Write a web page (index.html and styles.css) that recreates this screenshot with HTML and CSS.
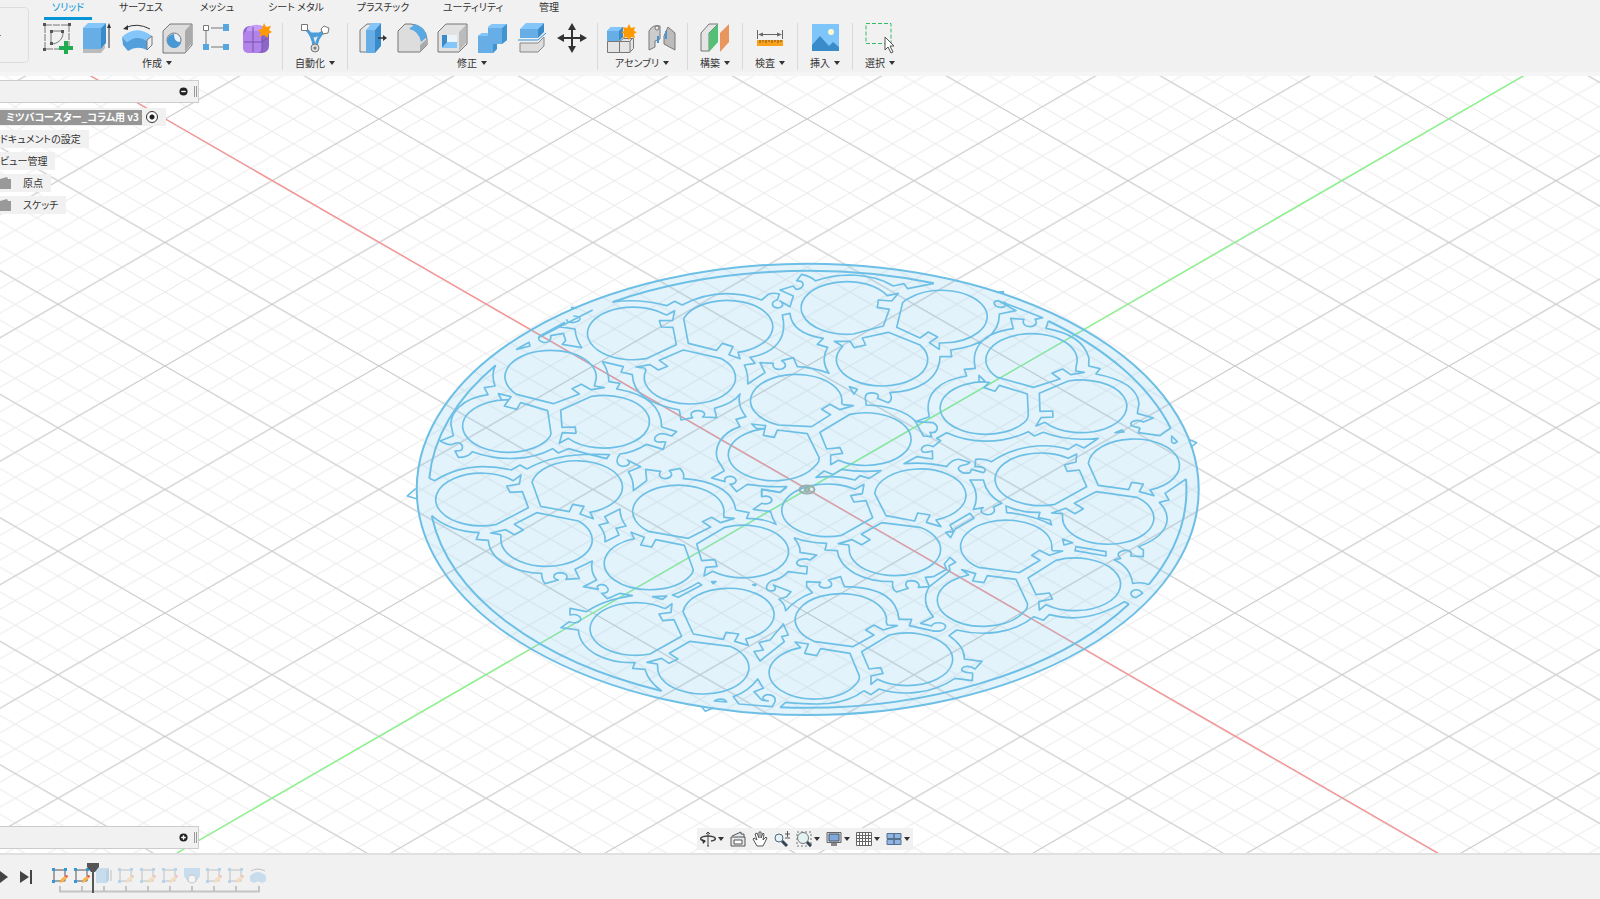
FILE: index.html
```
<!DOCTYPE html>
<html lang="ja">
<head>
    <meta charset="UTF-8">
    <meta name="viewport" content="width=device-width, initial-scale=1.0">
    <title>ミツバコースター_コラム用 v3</title>
    <link rel="stylesheet" href="styles.css">
</head>
<body>
    <header class="app-header">
        <button class="workspace" aria-label="ワークスペース"><span class="caret"></span></button>
        <div class="ribbon">
            <nav class="tabs">
                <button class="tab active"><span>ソリッド</span></button>
                <button class="tab"><span>サーフェス</span></button>
                <button class="tab"><span>メッシュ</span></button>
                <button class="tab"><span>シート メタル</span></button>
                <button class="tab"><span>プラスチック</span></button>
                <button class="tab"><span>ユーティリティ</span></button>
                <button class="tab"><span>管理</span></button>
            </nav>
            <div class="toolbar">
                <!-- create -->
                <div class="group">
                    <div class="tools">
                        <button class="tool" aria-label="スケッチを作成"><svg viewBox="0 0 30 30"><path d="M3 2h24v24H3z" fill="none" stroke="#777" stroke-dasharray="7 1"/><path d="M9 8h12v2c0 6-5 11-12 11z" fill="none" stroke="#777"/><path d="M1 0h3v3H1zM26 0h3v3h-3zM1 25h3v3H1zM8 7h3v3H8zM19 7h3v3h-3zM8 19h3v3H8z" fill="#555"/><path d="M22 18h4v5h5v4h-5v4h-4v-4h-5v-4h5z" fill="#20ad50"/></svg></button>
                        <button class="tool" aria-label="押し出し"><svg viewBox="0 0 30 30"><path d="M1 26h18l4-4v3l-4 5H1z" fill="#bbb"/><path d="M1 5l5-5h18l-5 5z" fill="#84c6fa"/><path d="M1 5h18v21H1z" fill="#68aee6"/><path d="M19 5l5-5v20l-5 6z" fill="#398cc9"/><path d="M27 25V3" stroke="#333" fill="none"/><path d="M25 5l2-5 2 5z" fill="#333"/></svg></button>
                        <button class="tool" aria-label="回転"><svg viewBox="0 0 30 30"><path d="M3 5q12-6 25 1" fill="none" stroke="#333"/><path d="M1 6l5-4v5z" fill="#333"/><path d="M0 14q14-13 30-1l-5 5q-10-7-20 1z" fill="#84c6fa"/><path d="M0 14l5 5q10-8 20-1v9q-10-5-19 1l-5-6z" fill="#539fdb"/><path d="M25 17l5-4v9l-5 5z" fill="#eee" stroke="#777"/></svg></button>
                        <button class="tool" aria-label="穴"><svg viewBox="0 0 30 30"><path d="M1 8l7-7h22v21l-7 8H1z" fill="#ddd" stroke="#777" stroke-linejoin="round"/><path d="M23 8l6-7v20l-6 8z" fill="#aaa"/><circle cx="12" cy="17" r="7" fill="#e5f2fc" stroke="#777"/><path d="M12 11a7 7 0 1 0 7 8q-7 1-7-8" fill="#4898d5"/></svg></button>
                        <button class="tool" aria-label="パターン"><svg viewBox="0 0 30 30"><path d="M4 8v14M9 5h13M9 24h13" stroke="#777" fill="none"/><path d="M1.500 2.500h5v5h-5z" fill="#fff" stroke="#777"/><path d="M21 1h6v7h-6zM1 21h6v6H1zM21 21h6v6h-6z" fill="#56a6df"/></svg></button>
                        <button class="tool" aria-label="フォームを作成"><svg viewBox="0 0 30 30"><rect x="1" y="3" width="26" height="27" rx="7" fill="#8c67c7"/><path d="M5 5q8-6 18-1l-4 6H4z" fill="#c69bf8"/><rect x="1" y="8" width="19" height="22" rx="5" fill="#b283e9"/><path d="M11 4v25M2 19h18l7-5M20 9v20" stroke="#7653ac" fill="none"/><path d="M22 0l2 4 5-1-2 4 3 2-4 2v4l-4-3-5 2 2-4-3-3 4-1z" fill="#f90"/></svg></button>
                    </div>
                    <button class="menu">作成<span class="caret"></span></button>
                </div>
                <!-- automate -->
                <div class="group single">
                    <div class="tools">
                        <button class="tool" aria-label="自動モデリング"><svg viewBox="0 0 30 30"><path d="M5 5q8 9 10 8t10-5M5 5q9 8 9 20M25 8q-8 5-9 17M11 11h8" stroke="#4d9ed8" stroke-width="3" fill="none"/><path d="M1.500 1.500h6v6h-6z" fill="#fff" stroke="#777"/><path d="M24 3l5 2-1 5-5 1-2-5z" fill="#fff" stroke="#777"/><circle cx="15" cy="25" r="4" fill="#ddd" stroke="#777"/><circle cx="15" cy="25" r="1.500" fill="#777"/></svg></button>
                    </div>
                    <button class="menu">自動化<span class="caret"></span></button>
                </div>
                <!-- modify -->
                <div class="group">
                    <div class="tools">
                        <button class="tool" aria-label="プレス/プル"><svg viewBox="0 0 30 30"><path d="M3 7l7-6h7v22l-7 6H3z" fill="#e7e7e7" stroke="#777"/><path d="M9 7l6-7h9l-6 7z" fill="#84c6fa"/><path d="M9 7h9v23H9z" fill="#68aee6"/><path d="M18 7l6-7v23l-6 7z" fill="#398cc9"/><path d="M21 15h6" stroke="#333" stroke-width="1.500"/><path d="M26 12l4 3-4 3z" fill="#333"/></svg></button>
                        <button class="tool" aria-label="フィレット"><svg viewBox="0 0 30 30"><path d="M1 8l7-7h6q15 2 16 15v6l-7 7H1z" fill="#ddd" stroke="#777"/><path d="M23 29v-7l7-6v6z" fill="#aaa"/><path d="M12 6l6-5q10 3 12 13l-6 5Q22 8 12 6z" fill="#59a9e2"/></svg></button>
                        <button class="tool" aria-label="シェル"><svg viewBox="0 0 30 30"><path d="M1 9l8-8h21v20l-8 8H1z" fill="#e2e2e2" stroke="#777"/><path d="M22 9l7-7v18l-7 8z" fill="#bbb"/><path d="M5 12h15v13H5z" fill="#edf4f9"/><path d="M5 12h5v8l-5 5z" fill="#398cc9"/><path d="M10 19h10v6H5z" fill="#84c6fa"/></svg></button>
                        <button class="tool" aria-label="結合"><svg viewBox="0 0 30 30"><path d="M1 13l4-3h6V4l4-3h15v16l-5 4h-5v5l-4 4H1z" fill="#68aee6"/><path d="M11 4l4-3h15l-4 4H11zM1 13l4-3h6v3z" fill="#84c6fa"/><path d="M25 5l5-4v16l-5 4zM20 21v5l-4 4v-9z" fill="#4294d1"/></svg></button>
                        <button class="tool" aria-label="ボディを分割"><svg viewBox="0 0 30 30"><path d="M3 6l6-6h18l-6 6z" fill="#84c6fa"/><path d="M3 6h18v9H3z" fill="#68aee6"/><path d="M21 6l6-6v9l-6 6z" fill="#398cc9"/><path d="M1 17h20l8-7" stroke="#2e8ed4" fill="none"/><path d="M3 20h18l6-6v9l-6 6H3z" fill="#ddd" stroke="#888"/></svg></button>
                        <button class="tool" aria-label="移動"><svg viewBox="0 0 30 30"><path d="M15 4v22M4 15h22" stroke="#333" stroke-width="2"/><path d="M15 0l4 7h-8zM15 30l4-7h-8zM0 15l7-4v8zM30 15l-7-4v8z" fill="#333"/></svg></button>
                    </div>
                    <button class="menu">修正<span class="caret"></span></button>
                </div>
                <!-- assemble -->
                <div class="group">
                    <div class="tools">
                        <button class="tool" aria-label="新規コンポーネント"><svg viewBox="0 0 30 30"><path d="M0.500 18.500h12v11h-12zM12.500 18.500l4-3h10v10l-4 4h-10z" fill="#e5e5e5" stroke="#777"/><path d="M12 18.500h11v11M23 18l3-3" fill="none" stroke="#777"/><path d="M0 8l4-4h12v10l-4 4H0z" fill="#68aee6"/><path d="M0 8l4-4h12l-4 4z" fill="#84c6fa"/><path d="M12 8l4-4v10l-4 4z" fill="#398cc9"/><path d="M22 1l2 4 4-1-1 4 3 1-3 2 1 4-4-1-2 3-2-3-4 1 1-4-3-2 3-1-1-4 4 1z" fill="#f90"/></svg></button>
                        <button class="tool" aria-label="ジョイント"><svg viewBox="0 0 30 30"><path d="M2 8q4-7 11-5v13l-5 2v6l-6 3z" fill="#ccc" stroke="#777"/><path d="M17 13l4-9 7 6v17l-11-6z" fill="#bbb" stroke="#777"/><path d="M11 13v7M19 8v8" stroke="#4597d4" stroke-width="2"/><circle cx="10" cy="5" r="2" fill="#eee" stroke="#777"/></svg></button>
                    </div>
                    <button class="menu">アセンブリ<span class="caret"></span></button>
                </div>
                <div class="group single">
                    <div class="tools"><button class="tool" aria-label="オフセット平面"><svg viewBox="0 0 30 30"><path d="M1 10l8-9 9 0-9 9v18H1z" fill="#e5e5e5" stroke="#777"/><path d="M9 10l9-9v18l-9 10z" fill="#53c076"/><path d="M20 10l9-9v18l-9 10z" fill="#e9965e"/></svg></button></div>
                    <button class="menu">構築<span class="caret"></span></button>
                </div>
                <div class="group single">
                    <div class="tools"><button class="tool" aria-label="計測"><svg viewBox="0 0 30 30"><path d="M2.500 7v9M27.500 7v9M5 11.500h20" stroke="#666" fill="none"/><path d="M3 11.500l5-2v4zM27 11.500l-5-2v4z" fill="#666"/><path d="M2 17h26v6H2z" fill="#f9a11b"/><path d="M5 17v3M8 17v2M11 17v3M14 17v2M17 17v3M20 17v2M23 17v3M26 17v2" stroke="#76531d"/></svg></button></div>
                    <button class="menu">検査<span class="caret"></span></button>
                </div>
                <div class="group single">
                    <div class="tools"><button class="tool" aria-label="画像を挿入"><svg viewBox="0 0 30 30"><path d="M2 1h27v27H2z" fill="#7ec5fa"/><circle cx="21" cy="9" r="3" fill="#fffbd1"/><path d="M2 22l8-9 9 10 4-4 6 5v4H2z" fill="#398cc9"/></svg></button></div>
                    <button class="menu">挿入<span class="caret"></span></button>
                </div>
                <div class="group single last">
                    <div class="tools"><button class="tool" aria-label="選択"><svg viewBox="0 0 30 30"><path d="M1 .500h25v20H1z" fill="none" stroke="#35b967" stroke-dasharray="4 2"/><path d="M20 14v13l3-3 3 6 2-1-3-6h4z" fill="#fff" stroke="#555"/></svg></button></div>
                    <button class="menu">選択<span class="caret"></span></button>
                </div>
            </div>
        </div>
    </header>

    <main class="viewport">
        <svg class="scene" viewBox="0 76 1600 777" preserveAspectRatio="xMidYMid slice" role="img" aria-label="スケッチ">
            <defs>
                <pattern id="minor" patternUnits="userSpaceOnUse" x="807" y="489.500" width="42.800" height="24.700">
                    <path d="M0 0L42.800 24.700M0 24.700L42.800 0" stroke="#e9e9e9" fill="none"/>
                </pattern>
                <pattern id="major" patternUnits="userSpaceOnUse" x="807" y="489.500" width="214" height="123.500">
                    <path d="M0 0L214 123.500M0 123.500L214 0" stroke="#c8c8c8" fill="none"/>
                </pattern>
            </defs>
            <rect y="76" width="1600" height="777" fill="#fff"/>
            <rect y="76" width="1600" height="777" fill="url(#minor)"/>
            <rect y="76" width="1600" height="777" fill="url(#major)"/>
            <path class="axis-x" d="M91 76L1438 853"/>
            <path class="axis-y" d="M1523 76L177 853"/>

            <!-- coaster rim -->
            <ellipse class="disc" cx="807.700" cy="489.400" rx="391" ry="225.700"/>
            <g class="line">
                <path d="M612.700 302A380 219 0 0 1 934 283.300M495.700 365.300A380 219 0 0 0 429.300 478.300M1048.300 321A380 219 0 0 1 1170.700 428.300M1186 479A380 219 0 0 1 1148.700 584.700M1129 604A380 219 0 0 1 780 707.300M661.700 691A380 219 0 0 1 431.700 515.700"/>
            </g>

            <g class="line thick" transform="translate(400 250) scale(.33333)">
                <!-- upper left -->
                <g>
                    <path d="M738 326A137 79 0 1 1 790 191L800 195L824 182L818 211L778 212L784 231L819 232L829 284Z"/>
                    <path d="M851 206A137 79 0 1 1 1014 307L1020 326L987 314L999 290L967 280L950 301L865 280Z"/>
                    <path d="M850 300L965 326A137 79 0 1 1 738 361L733 354L708 351L750 344L775 360L803 349L778 331Z"/>
                    <path d="M460 461L350 433A137 79 0 1 1 586 396L583 408L613 413L573 419L544 403L516 416L538 432Z"/>
                    <path d="M443 482L453 550Q452 560 443 568A137 79 0 1 1 325 449L305 450L295 431L333 440L313 468L350 478L362 458Z"/>
                    <path d="M482 481L575 439A137 79 0 1 1 505 565L478 580L487 548L528 550L526 531L486 532Z"/>
                    <path d="M1235 530L1135 525A137 79 0 1 1 1325 460L1330 464L1360 467L1320 479L1290 463L1265 478L1292 494Z"/>
                    <path d="M1222 551L1257 622Q1260 635 1245 648A137 79 0 1 1 1093 536L1070 536L1055 522L1097 527L1090 556L1123 562L1132 540Z"/>
                    <path d="M638 156Q720 145 800 167L824 154L846 165Q960 105 1085 150L1105 133Q1120 127 1138 132L1132 150C1112 155 1112 172 1135 174C1150 172 1152 160 1140 153L1170 170L1180 138L1140 120L1180 108L1188 118C1205 118 1215 105 1205 95L1190 92L1205 73Q1235 80 1247 93"/>
                    <path d="M287 346Q272 370 285 408L253 413L264 434C185 445 150 490 153 525L160 557L120 573Q150 590 165 580C175 575 190 582 187 595C185 605 170 602 165 603L175 622Q205 622 217 605C300 635 390 632 458 596L475 609L505 596Q560 612 620 626L628 614Q470 605 381 657L360 645L334 660C250 640 170 650 104 692L88 685"/>
                    <path d="M607 335L670 350L663 366L697 374C700 430 740 460 838 480L843 510L878 503C865 490 880 480 897 482C915 484 918 494 908 501L950 503L943 475Q1000 460 1020 432Q1010 465 1038 500L1008 508L1020 530C960 550 940 595 953 630L973 662L935 684L975 695C970 680 990 675 1003 683C1015 693 1003 705 990 702L1010 725L1042 703Q1100 712 1160 710L1140 727L1085 718V740"/>
                    <path d="M607 335Q625 360 627 395L660 400L650 417Q785 440 785 531L830 545L815 558L795 552C775 548 760 560 765 572C775 582 790 572 797 576L790 598L740 583Q700 608 660 612C645 630 650 648 670 649C690 648 692 635 682 630L722 650L685 665Q702 690 700 722L740 692L737 658L782 664C770 680 790 688 800 685C815 682 820 672 808 662L840 655Q855 670 850 686C930 690 1000 720 1007 780"/>
                    <path d="M1147 195C1165 270 1120 310 1050 322L1065 340L1033 345Q1045 370 1043 402L1095 368L1080 338L1120 340C1115 355 1130 360 1145 357C1160 352 1160 340 1145 332L1180 323L1192 350Q1230 350 1287 370Q1260 330 1283 292L1252 283L1270 265Q1175 250 1170 190Z"/>
                    <path d="M418 262L578 180M515 180V172L530 175M500 208C500 220 520 220 535 213C545 205 540 198 520 198M475 230L525 237Q527 265 545 293L487 283L497 272L490 250L452 257C455 270 445 280 430 277C412 272 412 260 425 255L495 217M350 298L387 277L390 288Z"/>
                    <path d="M47 716L22 738L52 747"/>
                </g>
                <!-- upper right -->
                <g transform="translate(1200 0)">
                    <path d="M268 178L250 228L160 252A137 79 0 1 1 252 128L262 137L295 130L275 153L235 150L232 172Z"/>
                    <path d="M290 232L308 158Q315 148 330 143A137 79 0 1 1 418 279V298L388 278L413 261L385 246L360 264Z"/>
                    <path d="M265 247L360 285A137 79 0 1 1 128 289L103 274L150 274L163 293L197 285L187 264Z"/>
                    <path d="M700 412L590 381A137 79 0 1 1 829 345L827 363L853 367L812 374L788 357L756 370L780 387Z"/>
                    <path d="M682 432L685 495Q683 513 665 523A137 79 0 1 1 556 395L537 376V395L568 397L552 413L585 424L598 406Z"/>
                    <path d="M718 430L805 393A137 79 0 1 1 735 517L708 528L723 503L759 501L758 483L720 484Z"/>
                    <path d="M60 547L150 493A137 79 0 1 1 115 631L92 644V615L128 610L120 593L80 597Z"/>
                    <path d="M860 710L765 763A137 79 0 1 1 805 625L830 612L828 636L793 645L802 664L838 660Z"/>
                    <path d="M895 706L865 640A137 79 0 1 1 1050 720L1062 737L1018 725L1030 702L995 697L986 719Z"/>
                    <path d="M45 93C120 65 220 70 280 108L312 101L323 116L402 100"/>
                    <path d="M583 155L595 152L648 182L598 192Q600 280 452 300L455 320L420 320C418 390 350 425 270 428Q280 450 265 458L232 445C245 430 215 425 200 432C190 445 200 450 198 465Q300 468 345 512L370 558L395 560L390 547C412 552 420 530 400 518L345 515L388 500C370 430 420 390 500 378L493 358L526 355C515 310 530 250 640 236L632 205L672 208C665 220 675 230 690 230C710 228 712 218 705 208L728 203L595 152M583 155C580 165 590 173 605 172C620 170 620 160 612 156"/>
                    <path d="M745 213L738 235Q850 255 867 325L866 348L900 356L888 372Q1010 395 1017 460L1012 490L1060 504L1030 516C1010 505 990 515 993 525C1000 533 1015 530 1020 535L1015 548L1080 557Q1095 545 1112 535"/>
                    <path d="M422 572L400 590C375 580 362 590 365 602C372 612 385 605 397 603L398 627L350 620L312 641Q380 635 440 650C455 628 475 625 485 630L510 637C500 650 480 640 475 655C478 668 495 672 510 668L515 658L550 668C562 660 555 648 525 650L527 628Q555 625 575 635C640 590 730 575 805 598L828 583L852 594L895 565Q800 575 730 547L703 558L685 545C600 585 510 580 440 548L410 565Z"/>
                    <path d="M48 682L72 663L100 674L125 658Q180 668 243 662L208 685L180 677L165 690Q110 675 48 682ZM148 410L172 418L162 432ZM945 548L965 540L972 546ZM1115 558L1132 575Q1120 585 1115 575ZM590 127L610 125V133M1165 568L1190 578L1172 592"/>
                </g>
                <!-- lower left -->
                <g transform="translate(0 660)">
                    <path d="M385 113L290 163A137 79 0 1 1 340 32L363 15L358 42L320 48L330 67L367 65Z"/>
                    <path d="M422 109L396 36A137 79 0 1 1 570 127L580 146L540 132L552 109L518 103L508 125Z"/>
                    <path d="M410 128L535 153A137 79 0 1 1 303 205L302 194L272 189L317 179L343 194L370 180L343 163Z"/>
                    <path d="M865 205L745 184A137 79 0 1 1 971 134L972 142L1003 145L962 158L935 142L907 155L932 171Z"/>
                    <path d="M853 226L880 300Q878 312 868 320A137 79 0 1 1 703 206L693 187L733 202L722 225L755 231L767 209Z"/>
                    <path d="M890 222L975 172A137 79 0 1 1 938 304L912 318L917 292L951 289L945 269L905 272Z"/>
                    <path d="M845 499L750 552A137 79 0 1 1 790 414L797 415L816 401L813 427L777 432L788 452L822 449Z"/>
                    <path d="M880 492L849 425A137 79 0 1 1 1037 507L1045 526L1004 514L1016 492L978 487L970 508Z"/>
                    <path d="M870 514L990 529A137 79 0 1 1 773 590L772 582L741 577L785 565L807 580L834 567L808 550Z"/>
                    <path d="M95 137Q150 185 237 188L229 208L265 211C270 270 340 308 425 310Q425 330 435 341L475 330C455 325 458 310 480 308C500 310 505 318 498 328L538 325L525 298L577 273Q570 305 590 330L550 350L595 358C585 345 605 340 618 348C630 360 625 370 605 370L622 386L660 370L697 377Q610 390 560 425L510 415V435C530 430 545 440 542 450C535 460 520 460 508 455L483 473L535 480C540 545 620 580 705 578L698 595L735 598Q745 635 785 663"/>
                    <path d="M660 117Q660 145 678 168L648 175L657 195L615 215Q618 190 597 165L625 158L614 140Z"/>
                    <path d="M1007 120L1047 128L1040 145Q1090 145 1128 163Q1115 140 1112 125L1060 118L1085 100C1100 105 1118 98 1115 88C1110 75 1095 78 1085 80V58L1140 67L1160 52"/>
                    <path d="M1182 203Q1203 230 1200 247L1250 255L1230 270C1210 262 1190 270 1190 280C1195 292 1210 287 1222 290L1220 312L1165 305Q1140 330 1115 332C1095 345 1095 360 1112 363C1128 363 1130 352 1120 345L1173 365L1160 380L1137 388Q1155 400 1157 422Q1190 385 1237 368L1220 350V335L1262 337C1252 345 1260 354 1278 354C1298 352 1300 340 1285 330L1322 320L1333 350C1450 352 1492 390 1497 448L1535 448L1528 467L1595 482"/>
                    <path d="M1182 203Q1220 217 1280 220L1275 240L1312 242C1320 300 1390 335 1478 335Q1475 360 1490 366L1525 355C1512 345 1515 332 1535 332C1555 333 1560 345 1555 352L1588 350L1576 322L1600 320"/>
                    <path d="M1150 462L1165 495L1145 500L1153 515L1080 573L1062 545L1090 540L1077 518L1110 510ZM1117 710L1125 695C1130 675 1100 668 1090 680C1085 688 1095 692 1105 693L1085 690L1062 665L1090 655L1073 627Q1045 665 1000 680L1017 702ZM943 693C955 685 975 685 980 696ZM1140 712L1157 697C1250 705 1330 710 1392 662"/>
                    <path d="M758 380L800 378L788 388ZM817 375Q860 360 895 338L905 345L835 382ZM935 335L948 335L940 341ZM1058 344L1068 343L1066 347ZM905 710L916 724L940 714"/>
                </g>
                <!-- lower right -->
                <g transform="translate(1200 660)">
                    <path d="M888 65L1010 82A137 79 0 1 1 788 138L787 131L755 129L797 115L825 131L850 116L823 100Z"/>
                    <path d="M258 137L224 70A137 79 0 1 1 408 150L423 170L379 157L390 135L353 129L344 153Z"/>
                    <path d="M218 143L125 196A137 79 0 1 1 165 58L192 43L187 71L152 77L162 96L198 92Z"/>
                    <path d="M245 158L360 172A137 79 0 1 1 148 235L146 225L115 221L157 209L185 224L210 209L184 193Z"/>
                    <path d="M657 308L535 292A137 79 0 1 1 755 238L758 242L788 243L748 256L718 241L695 256L720 271Z"/>
                    <path d="M648 328L682 400Q685 415 670 427A137 79 0 1 1 506 315L485 299L527 311L518 333L552 338L562 317Z"/>
                    <path d="M684 324L768 271A137 79 0 1 1 738 404L718 420L716 395L757 387L748 369L708 374Z"/>
                    <path d="M158 530L45 515A137 79 0 1 1 259 457L262 465L292 467L250 480L222 465L197 480L222 495Z"/>
                    <path d="M150 550L178 618Q180 630 168 642A137 79 0 1 1 2 533L-15 516L25 522L14 550L50 557L62 536Z"/>
                    <path d="M185 545L268 495A137 79 0 1 1 232 628L213 643V618L249 610L242 593L207 597Z"/>
                    <path d="M510 30H550Q560 75 605 100L580 112C590 125 575 136 560 134C540 130 540 120 550 113L520 118Q542 75 510 30ZM450 165L510 130L522 145L465 178L452 203L437 187L460 185ZM618 108Q670 130 720 127L715 143L750 150L755 165Q700 135 620 128Z"/>
                    <path d="M1158 27L1095 70L1107 90L1078 97C1125 145 1100 200 1015 230L1030 240V260L992 258C1000 245 985 238 970 242C950 247 952 258 962 265L943 270Q990 290 998 340Q1030 335 1046 344M788 207L818 218L792 225ZM828 230L918 245V258L825 242ZM1028 370L1008 383C990 380 988 365 1003 360C1015 357 1022 362 1028 370Z"/>
                    <path d="M987 402L973 395Q860 465 748 434L730 451L702 440C640 490 550 500 470 480L447 497Q495 530 493 567L546 574L525 597C505 583 485 590 485 600C492 610 510 607 518 610L517 632L465 625C400 670 310 680 237 657L213 674L192 662"/>
                    <path d="M400 320L440 298L433 282L450 262L467 277L447 287L450 302L388 350Q360 395 400 440L362 460L395 468C400 455 430 455 437 468C435 485 410 485 395 482"/>
                </g>
            </g>
            <ellipse class="origin" cx="807" cy="489.500" rx="7.500" ry="4"/>
            <circle class="origin" cx="807" cy="489.500" r="2"/>
        </svg>

        <aside class="browser">
            <div class="panel-bar">
                <button class="round" aria-label="折りたたむ"><svg viewBox="0 0 10 10"><circle cx="5" cy="5" r="4.500" fill="#222"/><path d="M2.500 5h5" stroke="#fff" stroke-width="1.500"/></svg></button>
                <span class="grip"></span>
            </div>
            <ul class="tree">
                <li class="node root"><span class="doc">ミツバコースター_コラム用 v3</span><input type="radio" name="active" aria-label="アクティブ" checked></li>
                <li class="node">ドキュメントの設定</li>
                <li class="node">ビュー管理</li>
                <li class="node"><svg class="folder" viewBox="0 0 11 12"><path d="M0 2l7-2 1 2h3v10H0z" fill="#999"/></svg>原点</li>
                <li class="node"><svg class="folder" viewBox="0 0 11 12"><path d="M0 2l7-2 1 2h3v10H0z" fill="#999"/></svg>スケッチ</li>
            </ul>
        </aside>

        <div class="dock">
            <div class="panel-bar">
                <button class="round" aria-label="展開"><svg viewBox="0 0 10 10"><circle cx="5" cy="5" r="4.500" fill="#222"/><path d="M2.500 5h5M5 2.500v5" stroke="#fff" stroke-width="1.500"/></svg></button>
                <span class="grip"></span>
            </div>
        </div>

        <div class="navbar">
            <button aria-label="オービット"><svg viewBox="0 0 16 16"><path d="M8 1v14M6 3l2-2 2 2M7 15h2" fill="none" stroke="#444"/><path d="M5 10C-2 9 0 5 8 5s10 4 3 5" fill="none" stroke="#444" stroke-width="1.500"/><path d="M2 8l4 2-3 3z" fill="#333"/></svg><span class="caret"></span></button>
            <button aria-label="ビュー正面"><svg viewBox="0 0 16 16"><path d="M1 6h14v9H1zM2 5l9-4v2h3v3" fill="#e3e6ea" stroke="#555"/><path d="M4 9h8v4H4z" fill="#fff" stroke="#555"/></svg></button>
            <button aria-label="パン"><svg viewBox="0 0 16 16"><path d="M5 15L1 8l1-1 3 2-2-6 2-1 2 5V1h2v6l2-5 1 1-1 6 3-3 1 1-4 8z" fill="#fff" stroke="#555"/></svg></button>
            <button aria-label="ズーム"><svg viewBox="0 0 16 16"><path d="M8 10l5 5" stroke="#345" stroke-width="3"/><circle cx="5" cy="7" r="4" fill="#e2f2f7" stroke="#567"/><path d="M11 3h5M13.500 0v6M11 7h5" stroke="#555"/></svg></button>
            <button aria-label="窓ズーム"><svg viewBox="0 0 16 16"><path d="M1 1h14v14H1z" fill="none" stroke="#777" stroke-dasharray="2 2"/><path d="M10 10l5 5" stroke="#345" stroke-width="3"/><circle cx="7" cy="7" r="5.500" fill="#e2f2f2" stroke="#777"/></svg><span class="caret"></span></button>
            <button aria-label="表示設定"><svg viewBox="0 0 16 16"><path d="M1 1.500h14v10H1z" fill="#ddd" stroke="#666"/><path d="M3 3h10v7H3z" fill="#7fa9dc" stroke="#456"/><path d="M5 12h6v3H5z" fill="#888"/></svg><span class="caret"></span></button>
            <button aria-label="グリッドとスナップ"><svg viewBox="0 0 16 16"><path d="M.500 1.500h15v13h-15zM3.500 1v14M6.500 1v14M9.500 1v14M12.500 1v14M0 4.500h15M0 7.500h15M0 10.500h15" fill="#fff" stroke="#666"/></svg><span class="caret"></span></button>
            <button aria-label="ビューポート"><svg viewBox="0 0 16 16"><path d="M1 2.500h7v5H1zM8 2.500h7v5H8zM1 8.500h7v5H1zM8 8.500h7v5H8z" fill="#91b5e3" stroke="#567090"/></svg><span class="caret"></span></button>
        </div>
    </main>

    <footer class="timeline">
        <button class="play" aria-label="再生"><svg viewBox="0 0 8 14"><path d="M0 1l8 6-8 6z" fill="#444"/></svg></button>
        <button class="end" aria-label="最後へ"><svg viewBox="0 0 12 14"><path d="M0 1l9 6-9 6z" fill="#444"/><path d="M11 0v14" stroke="#444" stroke-width="2"/></svg></button>
        <div class="history">
            <svg class="symbols" width="0" height="0" aria-hidden="true">
                <symbol id="sketch" viewBox="0 0 16 16"><path d="M2 2h11v11H2z" fill="none" stroke="#555"/><path d="M0 0h3v3H0zM12 0h3v3h-3zM0 12h3v3H0z" fill="#3598db"/><path d="M8 15l1-4 4-3 2 2-4 4z" fill="#f8b448"/><path d="M13 8l2-1 1 1-1 2z" fill="#e44"/></symbol>
                <symbol id="extrude" viewBox="0 0 16 16"><path d="M0 3l3-3h10v12l-3 3H0z" fill="#68aee6"/><path d="M10 3l3-3v12l-3 3z" fill="#398cc9"/><path d="M15 2v11" stroke="#555"/></symbol>
                <symbol id="hole" viewBox="0 0 16 16"><path d="M0 0h16v8l-4 6H4L0 8z" fill="#68aee6"/><circle cx="8" cy="11" r="4" fill="#fff" stroke="#777"/></symbol>
                <symbol id="revolve" viewBox="0 0 16 16"><path d="M1 3q7-4 14 0" fill="none" stroke="#555"/><path d="M0 8q8-8 16 0v5l-4 2q-4-3-8 0l-4-2z" fill="#68aee6"/></symbol>
            </svg>
            <div class="features">
                <button aria-label="スケッチ1"><svg><use href="#sketch"/></svg></button>
                <button aria-label="スケッチ2"><svg><use href="#sketch"/></svg></button>
                <button class="off" aria-label="押し出し1"><svg><use href="#extrude"/></svg></button>
                <button class="off" aria-label="スケッチ3"><svg><use href="#sketch"/></svg></button>
                <button class="off" aria-label="スケッチ4"><svg><use href="#sketch"/></svg></button>
                <button class="off" aria-label="スケッチ5"><svg><use href="#sketch"/></svg></button>
                <button class="off" aria-label="穴1"><svg><use href="#hole"/></svg></button>
                <button class="off" aria-label="スケッチ6"><svg><use href="#sketch"/></svg></button>
                <button class="off" aria-label="スケッチ7"><svg><use href="#sketch"/></svg></button>
                <button class="off" aria-label="回転1"><svg><use href="#revolve"/></svg></button>
            </div>
            <svg class="scale" viewBox="0 0 216 7"><path d="M8 0v5.500M30 0v5.500M52 0v5.500M74 0v5.500M96 0v5.500M118 0v5.500M140 0v5.500M162 0v5.500M184 0v5.500M207 0v5.500M7 5.500h201" fill="none" stroke="#c4c4c4" stroke-width="2"/></svg>
            <svg class="marker" viewBox="0 0 12 30"><path d="M0 0h12v4L8 9H4L0 4z" fill="#555"/><path d="M6 5v25" stroke="#555" stroke-width="2"/></svg>
        </div>
    </footer>
</body>
</html>
```
FILE: styles.css
```
:root {
    --bar: #f1f1f1;
    --line: #d9d9d9;
    --text: #333;
    --accent: #0696d7;
    --sketch: #6dbfe6;
}

* {
    box-sizing: border-box;
}

body {
    margin: 0;
    height: 100vh;
    display: flex;
    flex-direction: column;
    overflow: hidden;
    font-family: "Noto Sans CJK JP", sans-serif;
    font-feature-settings: "palt";
    font-size: 10px;
    line-height: 14px;
    color: var(--text);
    background: var(--bar);
}

button {
    border: none;
    padding: 0;
    background: none;
    color: inherit;
    font: inherit;
    font-feature-settings: inherit;
}

svg {
    display: block;
}

.caret {
    display: inline-block;
    border: 3px solid transparent;
    border-top: 4px solid #333;
    border-bottom: none;
}

/* Header */
.app-header {
    height: 76px;
    flex: none;
    display: flex;
    background: var(--bar);
    border-bottom: 4px solid #f5f5f5;
}

.workspace {
    width: 29px;
    height: 56px;
    margin: 7px 4px 0 0;
    border: 1px solid #ddd;
    border-left: none;
    border-radius: 0 5px 5px 0;
    text-align: left;
}

.workspace .caret {
    margin-left: -5px;
}

.tabs {
    display: grid;
    grid-template-columns: 70px 76px 76px 82px 92px 88px 64px;
    height: 20px;
}

.tab {
    display: flex;
    justify-content: center;
    white-space: nowrap;
}

.tab span {
    height: 20px;
}

.tab.active span {
    width: 48px;
    color: var(--accent);
    border-bottom: 3px solid var(--accent);
}

.toolbar {
    display: flex;
    padding-top: 3px;
}

.group {
    height: 47px;
    padding: 0 10px 0 9px;
    border-right: 1px solid var(--line);
    display: flex;
    flex-direction: column;
    align-items: center;
    justify-content: space-between;
}

.group.single {
    padding: 0 12px;
}

.group.last {
    border-right: none;
}

.tools {
    display: flex;
    gap: 10px;
}

.tool,
.tool svg {
    width: 30px;
    height: 30px;
    overflow: visible;
}

.menu {
    display: flex;
    align-items: center;
    gap: 4px;
    white-space: nowrap;
}

/* Canvas */
.viewport {
    flex: 1;
    min-height: 0;
    position: relative;
    display: flex;
    flex-direction: column;
    justify-content: space-between;
    padding: 4px 0;
    overflow: hidden;
}

.scene {
    position: absolute;
    inset: 0;
    width: 100%;
    height: 100%;
}

.axis-x {
    stroke: #ff8c8c;
    stroke-width: 1.2;
}

.axis-y {
    stroke: #7dfa7d;
    stroke-width: 1.2;
}

.disc {
    fill: #64bee8;
    fill-opacity: .19;
    stroke: var(--sketch);
    stroke-width: 2;
}

.line {
    fill: none;
    stroke: var(--sketch);
    stroke-width: 2;
    stroke-linejoin: round;
}

.thick {
    stroke-width: 5;
}

.origin {
    fill: none;
    stroke: #9aaeb0;
    stroke-width: 2;
}

.browser,
.dock {
    position: relative;
    align-self: flex-start;
}

.panel-bar {
    width: 199px;
    height: 23px;
    padding-right: 1px;
    display: flex;
    align-items: center;
    justify-content: flex-end;
    gap: 6px;
    background: var(--bar);
    border: 1px solid #ccc;
    border-left: none;
}

.round svg {
    width: 9px;
    height: 9px;
}

.grip {
    width: 3px;
    height: 11px;
    border: 1px solid #999;
    border-width: 0 1px;
}

.tree {
    list-style: none;
    margin: 5px 0 0;
    padding: 0;
    display: flex;
    flex-direction: column;
    align-items: flex-start;
    gap: 4px;
}

.node {
    height: 18px;
    padding-right: 8px;
    display: flex;
    align-items: center;
    white-space: nowrap;
    background: var(--bar);
}

.node.root {
    gap: 4px;
}

.doc {
    width: 142px;
    height: 15px;
    padding-left: 6px;
    background: #969696;
    color: #fff;
    font-weight: bold;
}

.root input {
    appearance: none;
    width: 12px;
    height: 12px;
    margin: 0;
    border: 1px solid #333;
    border-radius: 50%;
    background: radial-gradient(circle, #222 2px, #fff 3px);
}

.folder {
    width: 11px;
    height: 12px;
    margin-right: 12px;
}

.navbar {
    position: absolute;
    left: 50%;
    bottom: 3px;
    transform: translateX(-103px);
    height: 22px;
    padding: 0 3px;
    display: flex;
    align-items: center;
    gap: 6px;
    background: var(--bar);
}

.navbar button {
    display: flex;
    align-items: center;
    gap: 2px;
}

.navbar svg {
    width: 16px;
    height: 16px;
}

/* Timeline */
.timeline {
    height: 46px;
    flex: none;
    display: flex;
    align-items: flex-start;
    background: var(--bar);
    border-top: 2px solid #e0e0e0;
}

.play,
.end {
    margin-top: 15px;
}

.play svg {
    width: 8px;
    height: 14px;
}

.end {
    margin-left: 12px;
}

.end svg {
    width: 12px;
    height: 14px;
}

.history {
    position: relative;
    margin: 13px 0 0 20px;
}

.symbols {
    position: absolute;
}

.features {
    display: flex;
    gap: 6px;
}

.features svg {
    width: 16px;
    height: 16px;
}

.off {
    opacity: .3;
}

.scale {
    width: 216px;
    height: 7px;
    margin-top: 2px;
}

.marker {
    position: absolute;
    left: 35px;
    top: -5px;
    width: 12px;
    height: 30px;
}
```
